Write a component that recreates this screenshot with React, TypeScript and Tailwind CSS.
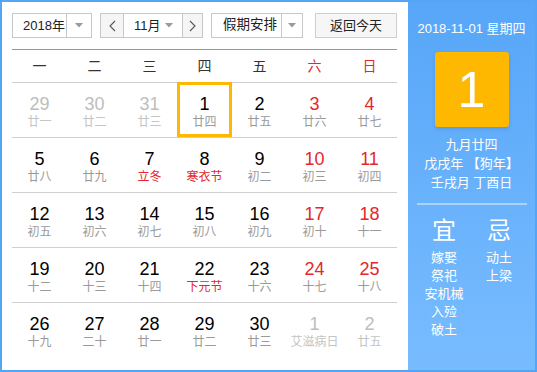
import React from 'react';

type Day = { d: number; l: string; out?: boolean; fest?: boolean; sel?: boolean };

const rows: Day[][] = [
    [{ d: 29, l: '廿一', out: true }, { d: 30, l: '廿二', out: true }, { d: 31, l: '廿三', out: true }, { d: 1, l: '廿四', sel: true }, { d: 2, l: '廿五' }, { d: 3, l: '廿六' }, { d: 4, l: '廿七' }],
    [{ d: 5, l: '廿八' }, { d: 6, l: '廿九' }, { d: 7, l: '立冬', fest: true }, { d: 8, l: '寒衣节', fest: true }, { d: 9, l: '初二' }, { d: 10, l: '初三' }, { d: 11, l: '初四' }],
    [{ d: 12, l: '初五' }, { d: 13, l: '初六' }, { d: 14, l: '初七' }, { d: 15, l: '初八' }, { d: 16, l: '初九' }, { d: 17, l: '初十' }, { d: 18, l: '十一' }],
    [{ d: 19, l: '十二' }, { d: 20, l: '十三' }, { d: 21, l: '十四' }, { d: 22, l: '下元节', fest: true }, { d: 23, l: '十六' }, { d: 24, l: '十七' }, { d: 25, l: '十八' }],
    [{ d: 26, l: '十九' }, { d: 27, l: '二十' }, { d: 28, l: '廿一' }, { d: 29, l: '廿二' }, { d: 30, l: '廿三' }, { d: 1, l: '艾滋病日', out: true }, { d: 2, l: '廿五', out: true }],
];

const weekdays = ['一', '二', '三', '四', '五', '六', '日'];

const Caret = () => (
    <svg width="8" height="5" viewBox="0 0 8 5"><path d="M0 0 L8 0 L4 4.5 Z" fill="#999" /></svg>
);

const Chevron = ({ dir }: { dir: 'l' | 'r' }) => (
    <svg width="7" height="12" viewBox="0 0 7 12">
        <path d={dir === 'l' ? 'M6 1 L1 6 L6 11' : 'M1 1 L6 6 L1 11'} fill="none" stroke="#555" strokeWidth="1.1" />
    </svg>
);

export default function App() {
    return (
        <div className="w-[537px] h-[372px] border-2 border-[#55a5f7] flex overflow-hidden text-[#222]" style={{ fontFamily: '"Liberation Sans", "Noto Sans CJK SC", sans-serif' }}>

            {/* calendar */}
            <div className="w-[406px] h-full bg-white pl-[10px] pt-[11px]">
                <div className="flex h-[25px] text-[13px]">
                    <div className="w-[80px] flex border border-[#c8c8c8]">
                        <div className="flex-1 flex items-center pl-[10px]">2018年</div>
                        <div className="w-[25px] border-l border-[#c8c8c8] flex items-center justify-center"><Caret /></div>
                    </div>
                    <div className="ml-[8px] w-[103px] flex border border-[#c8c8c8]">
                        <div className="w-[22px] bg-[#f5f5f5] flex items-center justify-center"><Chevron dir="l" /></div>
                        <div className="w-[60px] border-x border-[#c8c8c8] flex items-center justify-between pl-[10px] pr-[9px]">
                            <span>11月</span><Caret />
                        </div>
                        <div className="flex-1 bg-[#f5f5f5] flex items-center justify-center"><Chevron dir="r" /></div>
                    </div>
                    <div className="ml-[8px] w-[92px] flex border border-[#c8c8c8]">
                        <div className="flex-1 flex items-center pl-[11px] text-[13.5px]">假期安排</div>
                        <div className="w-[21px] border-l border-[#c8c8c8] flex items-center justify-center"><Caret /></div>
                    </div>
                    <div className="ml-[12px] w-[82px] border border-[#cfcfcf] bg-[#f6f6f6] flex items-center justify-center">返回今天</div>
                </div>

                <div className="w-[385px] h-px bg-[#55a5f7] mt-[11px]" />

                <div className="w-[385px]">
                    <div className="grid grid-cols-7 h-[33px] border-b border-[#cfcfcf] text-[14px]">
                        {weekdays.map((w, i) => (
                            <div key={w} className={`flex items-center justify-center ${i >= 5 ? 'text-[#e6262d]' : 'text-[#333]'}`}>{w}</div>
                        ))}
                    </div>
                    {rows.map((row, ri) => (
                        <div key={ri} className={`grid grid-cols-7 h-[55px] ${ri < rows.length - 1 ? 'border-b border-[#cfcfcf]' : ''}`}>
                            {row.map((c, ci) => {
                                const weekend = ci >= 5;
                                const numColor = c.out ? 'text-[#bdbdbd]' : weekend ? 'text-[#e6262d]' : 'text-black';
                                const lunColor = c.out ? 'text-[#c4c4c4]' : c.fest ? 'text-[#e6262d]' : 'text-[#9a9a9a]';
                                return (
                                    <div key={ci} className="relative flex flex-col items-center pt-[11px]">
                                        {c.sel && <div className="absolute left-0 right-0 top-[-1px] bottom-0 border-[3px] border-[#ffb800]" />}
                                        <div className={`text-[18px] leading-[20px] ${numColor}`}>{c.d}</div>
                                        <div className={`text-[12px] leading-[16px] whitespace-nowrap ${lunColor}`}>{c.l}</div>
                                    </div>
                                );
                            })}
                        </div>
                    ))}
                </div>
            </div>

            {/* today panel */}
            <div className="flex-1 h-full bg-gradient-to-b from-[#57a6f8] to-[#78bcff] text-white flex flex-col items-center">
                <div className="mt-[18px] text-[13px] leading-[18px]">2018-11-01 星期四</div>
                <div className="mt-[14px] w-[74px] h-[75px] rounded-[3px] bg-[#ffb800] shadow-[0_2px_4px_rgba(0,0,0,0.12)] flex items-center justify-center text-[50px] leading-none">1</div>
                <div className="mt-[8px] text-[13px] leading-[19px] text-center">
                    <div>九月廿四</div>
                    <div>戊戌年 【狗年】</div>
                    <div>壬戌月 丁酉日</div>
                </div>
                <div className="mt-[11px] w-[110px] h-[2px] bg-[#a9d2fc]" />
                <div className="mt-[12px] flex">
                    <div className="w-[55px] flex flex-col items-center">
                        <div className="text-[24px] leading-[28px]">宜</div>
                        <div className="mt-[4px] text-[13px] leading-[18px] text-center">
                            <div>嫁娶</div>
                            <div>祭祀</div>
                            <div>安机械</div>
                            <div>入殓</div>
                            <div>破土</div>
                        </div>
                    </div>
                    <div className="w-[55px] flex flex-col items-center">
                        <div className="text-[24px] leading-[28px]">忌</div>
                        <div className="mt-[4px] text-[13px] leading-[18px] text-center">
                            <div>动土</div>
                            <div>上梁</div>
                        </div>
                    </div>
                </div>
            </div>
        </div>
    );
}
